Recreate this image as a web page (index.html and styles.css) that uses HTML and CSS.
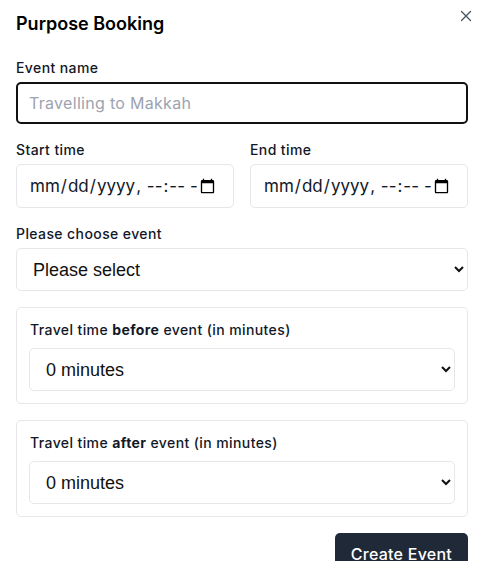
FILE: index.html
```html
<!DOCTYPE html>
<html lang="en">
<head>
<meta charset="utf-8">
<title>Purpose Booking</title>
<link rel="stylesheet" href="styles.css">
</head>
<body>
<div class="modal">
  <button class="close" aria-label="Close">
    <svg width="12" height="12" viewBox="0 0 12 12"><path d="M1.5 1.5 L10.5 10.5 M10.5 1.5 L1.5 10.5" stroke="#4b5563" stroke-width="1.4" stroke-linecap="round"/></svg>
  </button>
  <h2 class="title">Purpose Booking</h2>
  <form class="form">
    <div class="field">
      <label class="label" for="name">Event name</label>
      <input class="text-input" id="name" type="text" placeholder="Travelling to Makkah">
    </div>
    <div class="row">
      <div class="field">
        <label class="label" for="start">Start time</label>
        <input class="date-input" id="start" type="datetime-local">
      </div>
      <div class="field">
        <label class="label" for="end">End time</label>
        <input class="date-input" id="end" type="datetime-local">
      </div>
    </div>
    <div class="field">
      <label class="label" for="ev">Please choose event</label>
      <select class="select" id="ev"><option>Please select</option></select>
    </div>
    <div class="card">
      <label class="label card-label" for="before">Travel time <b>before</b> event (in minutes)</label>
      <select class="select" id="before"><option>0 minutes</option></select>
    </div>
    <div class="card">
      <label class="label card-label" for="after">Travel time <b>after</b> event (in minutes)</label>
      <select class="select" id="after"><option>0 minutes</option></select>
    </div>
    <div class="actions">
      <button type="button" class="primary">Create Event</button>
    </div>
  </form>
</div>
</body>
</html>
```
FILE: styles.css
```css
* { box-sizing: border-box; }
body {
  margin: 0;
  background: #ffffff;
  font-family: Inter, "Open Sans", sans-serif;
  color: #111827;
}
.modal {
  position: relative;
  padding: 10px 19px 0 16px;
  width: 487px;
}
.close {
  position: absolute;
  top: 9px;
  right: 14px;
  width: 14px;
  height: 14px;
  padding: 1px;
  border: 0;
  background: none;
  display: flex;
  align-items: center;
  justify-content: center;
}
.title {
  margin: 0 0 20px 0;
  font-size: 18px;
  line-height: 28px;
  font-weight: 600;
  color: #000;
}
.form {
  display: flex;
  flex-direction: column;
  gap: 16px;
}
.field {
  display: flex;
  flex-direction: column;
  gap: 4px;
  min-width: 0;
}
.row {
  display: grid;
  grid-template-columns: minmax(0, 1fr) minmax(0, 1fr);
  gap: 16px;
}
.label {
  font-size: 14px;
  line-height: 20px;
  font-weight: 500;
  letter-spacing: 0.4px;
  color: #111827;
}
.label b { font-weight: 700; }
.text-input {
  height: 42px;
  border: 2px solid #111111;
  border-radius: 5px;
  padding: 0 11px;
  font-family: inherit;
  font-size: 16px;
  letter-spacing: 0.3px;
  color: #111827;
  outline: none;
}
.text-input::placeholder { color: #9ca3af; }
.date-input {
  width: 100%;
  min-width: 0;
  height: 44px;
  border: 1px solid #e5e7eb;
  border-radius: 5px;
  padding: 0 15px 0 12px;
  font-family: inherit;
  font-size: 17px;
  color: #111827;
  background: #fff;
}
.select {
  height: 43px;
  border: 1px solid #e5e7eb;
  border-radius: 5px;
  padding: 0 2px 0 12px;
  font-family: "Liberation Sans", Arial, sans-serif;
  font-size: 18px;
  color: #111;
  background: #fff;
}
.card {
  border: 1px solid #e5e7eb;
  border-radius: 5px;
  padding: 12px;
  display: flex;
  flex-direction: column;
  gap: 8px;
}
.card-label { padding-left: 1px; }
.actions {
  display: flex;
  justify-content: flex-end;
}
.primary {
  background: #1f2937;
  color: #fff;
  border: 0;
  border-radius: 5px;
  padding: 9px 16px 8px;
  font-family: inherit;
  font-size: 16px;
  line-height: 24px;
  letter-spacing: 0.25px;
  font-weight: 500;
}
```
